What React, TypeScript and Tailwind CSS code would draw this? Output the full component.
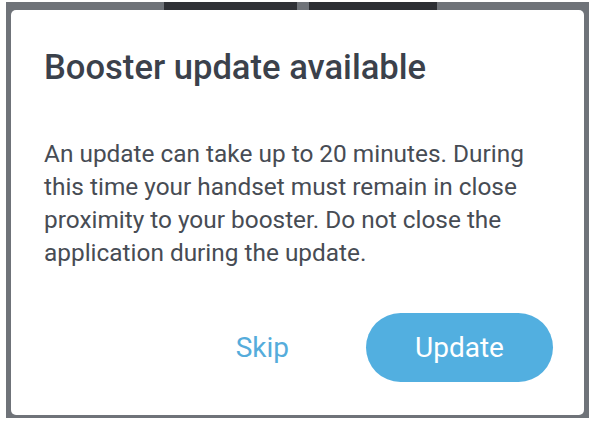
import React from "react";

const App = () => {
  return (
    <div className="w-[594px] h-[424px] bg-white pt-[2px] pl-[6px] font-['Roboto',sans-serif]">
      <div className="relative w-[583px] h-[416px] bg-[#6f7379] pt-[8px] pl-[5px]">
        {/* bits of the screen behind the dialog */}
        <div className="absolute top-0 left-[158px] w-[133px] h-[8px] bg-[#2f3136]" />
        <div className="absolute top-0 left-[303px] w-[128px] h-[8px] bg-[#2c2e33]" />
        <div className="w-[573px] h-[405px] bg-white rounded-[5px] pt-[37px] pl-[33px] pr-[31px] flex flex-col">
          <h1 className="text-[34.6px] leading-[40px] font-medium text-[#3b414b]">
            Booster update available
          </h1>
          <p className="mt-[50px] text-[24.4px] leading-[33px] text-[#474c54]">
            An update can take up to 20 minutes. During this time your handset must remain in close
            proximity to your booster. Do not close the application during the update.
          </p>
          <div className="mt-[44px] flex items-center justify-end">
            <button className="text-[28px] text-[#55acdb] mr-[77px]">Skip</button>
            <button className="w-[187px] h-[69px] rounded-full bg-[#52afe0] text-[28px] text-white">
              Update
            </button>
          </div>
        </div>
      </div>
    </div>
  );
};

export default App;
